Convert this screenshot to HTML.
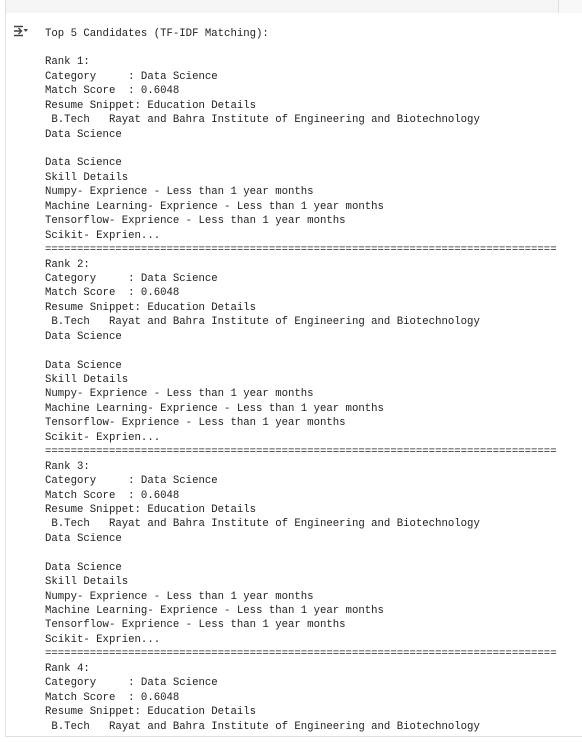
<!DOCTYPE html>
<html><head><style>
html,body{margin:0;padding:0;background:#fff;width:582px;height:742px;overflow:hidden;position:relative}
.top{position:absolute;left:6px;top:0;width:552px;height:13px;background:#f5f5f5}
.topr{position:absolute;left:558px;top:0;width:1px;height:13px;background:#ddd}
.topr2{position:absolute;left:559px;top:0;width:23px;height:13px;background:#f8f8f8}
.lb{position:absolute;left:5px;top:0;width:1px;height:737px;background:#e0e0e0}
.bb{position:absolute;left:5px;top:736px;width:577px;height:1px;background:#e0e0e0}
pre{position:absolute;left:45px;top:26.5px;margin:0;font-family:"Liberation Mono",monospace;font-size:10.67px;line-height:14.43px;color:#212121}
svg{position:absolute;left:13px;top:25px}
</style></head><body>
<div class="top"></div><div class="topr"></div><div class="topr2"></div><div class="lb"></div><div class="bb"></div>
<svg width="16" height="13" viewBox="0 0 16 13"><g stroke="#444" stroke-width="1.4" fill="none"><path d="M1 1.5H10M1 6H8.5M5.5 3L8.5 6L5.5 9M1 10.5H10"/></g><path d="M10.5 4H15L12.75 7Z" fill="#444"/></svg>
<pre>Top 5 Candidates (TF-IDF Matching):

Rank 1:
Category     : Data Science
Match Score  : 0.6048
Resume Snippet: Education Details
 B.Tech   Rayat and Bahra Institute of Engineering and Biotechnology
Data Science

Data Science
Skill Details
Numpy- Exprience - Less than 1 year months
Machine Learning- Exprience - Less than 1 year months
Tensorflow- Exprience - Less than 1 year months
Scikit- Exprien...
================================================================================
Rank 2:
Category     : Data Science
Match Score  : 0.6048
Resume Snippet: Education Details
 B.Tech   Rayat and Bahra Institute of Engineering and Biotechnology
Data Science

Data Science
Skill Details
Numpy- Exprience - Less than 1 year months
Machine Learning- Exprience - Less than 1 year months
Tensorflow- Exprience - Less than 1 year months
Scikit- Exprien...
================================================================================
Rank 3:
Category     : Data Science
Match Score  : 0.6048
Resume Snippet: Education Details
 B.Tech   Rayat and Bahra Institute of Engineering and Biotechnology
Data Science

Data Science
Skill Details
Numpy- Exprience - Less than 1 year months
Machine Learning- Exprience - Less than 1 year months
Tensorflow- Exprience - Less than 1 year months
Scikit- Exprien...
================================================================================
Rank 4:
Category     : Data Science
Match Score  : 0.6048
Resume Snippet: Education Details
 B.Tech   Rayat and Bahra Institute of Engineering and Biotechnology</pre>
</body></html>
